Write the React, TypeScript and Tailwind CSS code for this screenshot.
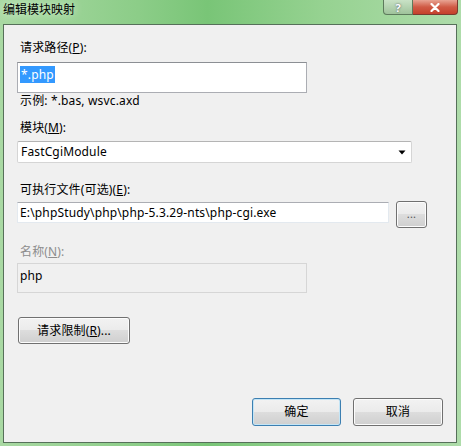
const font = { fontFamily: '"Noto Sans", "Noto Sans CJK SC", sans-serif' }

function Btn({ children, primary, className }: { children: React.ReactNode; primary?: boolean; className: string }) {
  return (
    <div
      className={`flex items-center justify-center rounded-[3px] border text-[12px] text-black ${
        primary
          ? 'border-[#3c7fb1] shadow-[inset_0_0_0_1px_#c4e5f6]'
          : 'border-[#707070] shadow-[inset_0_0_0_1px_#fcfcfc]'
      } bg-[linear-gradient(#f2f2f2_0%,#ebebeb_49%,#dddddd_50%,#cfcfcf_100%)] ${className}`}
    >
      {children}
    </div>
  )
}

export default function App() {
  return (
    <div
      style={font}
      className="flex h-[446px] w-[461px] flex-col bg-[linear-gradient(90deg,#a9d9a3_0%,#8ccd88_30%,#79c577_45%,#96d291_70%,#aedcaa_100%)]"
    >
      {/* title bar */}
      <div className="flex h-[24px] shrink-0 items-start">
        <div className="pl-[3px] pt-[3px] text-[12px] leading-[14px] text-black [text-shadow:0_0_8px_#e8f6e6]">编辑模块映射</div>
        <div className="ml-auto mr-[3px] flex h-[15px]">
          <div className="flex w-[30px] items-center justify-center rounded-bl-[4px] border border-t-0 border-[#5d7a5c] bg-[linear-gradient(#c9e2c6,#9fc39b)] text-[11px] font-bold leading-none text-white [text-shadow:0_0_2px_#445]">
            ?
          </div>
          <div className="flex w-[45px] items-center justify-center rounded-br-[4px] border border-l-0 border-t-0 border-[#7a3a30] bg-[linear-gradient(#e8a493,#d05a45_50%,#c5402b)]">
            <svg width="10" height="9" viewBox="0 0 10 9">
              <path d="M1.5 1l7 7M8.5 1l-7 7" stroke="#fff" strokeWidth="2.2" strokeLinecap="round" />
            </svg>
          </div>
        </div>
      </div>

      {/* client area */}
      <div className="mb-[3px] ml-[3px] mr-[4px] flex flex-1 flex-col border border-[#56705a] bg-[#f0f0f0] pl-[13px] tracking-[0.15px]">
        <div className="mt-[15px] h-[16px] pl-[3px] text-[12px] leading-[16px]">
          请求路径(<u>P</u>):
        </div>
        <div className="mt-[6px] h-[31px] w-[290px] border border-[#abadb3] border-t-[#8c8f94] bg-white pl-[2px] pt-[5px] text-[12px] leading-[13px]">
          <span className="bg-[#3399ff] px-[1px] text-white">*.php</span>
        </div>
        <div className="h-[16px] pl-[3px] text-[12px] leading-[16px]">示例: *.bas, wsvc.axd</div>

        <div className="mt-[11px] h-[16px] pl-[3px] text-[12px] leading-[16px]">
          模块(<u>M</u>):
        </div>
        <div className="mt-[5px] flex h-[22px] w-[395px] items-center rounded-[2px] border border-[#d5d5d5] border-t-[#b4b4b4] bg-white pl-[3px] pr-[5px] text-[12px]">
          <span>FastCgiModule</span>
          <svg className="ml-auto" width="8" height="5" viewBox="0 0 8 5">
            <path d="M0.5 0.5h7L4 4.5z" fill="#000" />
          </svg>
        </div>

        <div className="mt-[19px] h-[16px] pl-[3px] text-[12px] leading-[16px]">
          可执行文件(可选)(<u>E</u>):
        </div>
        <div className="mt-[3px] flex items-start gap-[7px]">
          <div className="mt-[1px] flex h-[21px] w-[372px] items-center border border-[#e3e9ef] border-t-[#abadb3] bg-white pl-[2px] text-[12px]">
            E:\phpStudy\php\php-5.3.29-nts\php-cgi.exe
          </div>
          <Btn className="h-[27px] w-[31px] !text-[11px] !text-[#555]">...</Btn>
        </div>

        <div className="mt-[16px] h-[16px] pl-[3px] text-[12px] leading-[16px] text-[#8d8d8d]">
          名称(<u>N</u>):
        </div>
        <div className="mt-[3px] h-[30px] w-[290px] border border-[#d6d6d6] bg-[#f0f0f0] pl-[2px] pt-[4px] text-[12px] leading-[16px]">
          php
        </div>

        <Btn className="ml-[1px] mt-[24px] h-[27px] w-[112px]">
          请求限制(<u>R</u>)...
        </Btn>

        <div className="mt-[54px] flex gap-[12px] pl-[235px]">
          <Btn primary className="h-[28px] w-[89px]">
            确定
          </Btn>
          <Btn className="h-[28px] w-[90px]">取消</Btn>
        </div>
      </div>
    </div>
  )
}
